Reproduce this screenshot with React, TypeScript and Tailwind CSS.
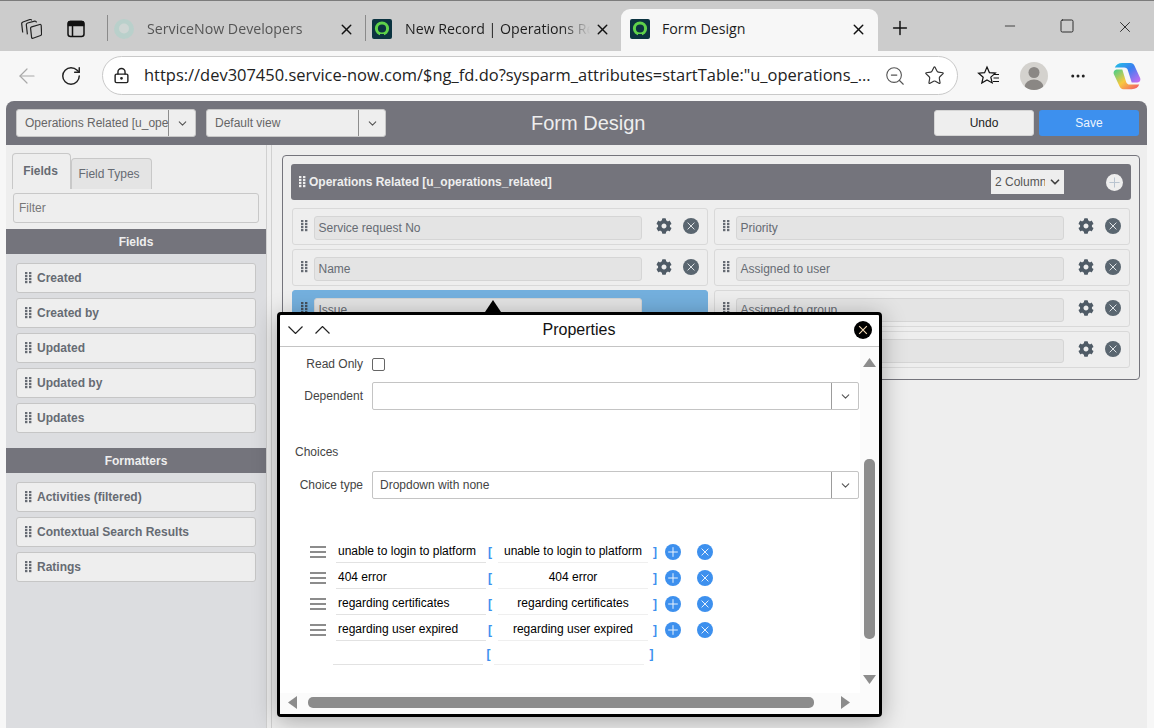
import { FaCog } from 'react-icons/fa';
import { LuChevronDown, LuPlus, LuX, LuMinus, LuSquare, LuArrowLeft, LuRotateCw, LuZoomOut, LuStar, LuEllipsis, LuLockKeyhole } from 'react-icons/lu';

const fieldItems = ['Created', 'Created by', 'Updated', 'Updated by', 'Updates'];
const formatters = ['Activities (filtered)', 'Contextual Search Results', 'Ratings'];
const leftRows = ['Service request No', 'Name', 'Issue'];
const rightRows = ['Priority', 'Assigned to user', 'Assigned to group', ''];
const choices = [
  { label: 'unable to login to platform', value: 'unable to login to platform' },
  { label: '404 error', value: '404 error' },
  { label: 'regarding certificates', value: 'regarding certificates' },
  { label: 'regarding user expired', value: 'regarding user expired' },
];

function Grip({ className }: { className: string }) {
  return (
    <svg viewBox="0 0 7 12" width="7" height="12" className={className} fill="currentColor">
      {[0, 3, 6, 9].map((y) => (
        <g key={y}>
          <rect x="0" y={y} width="2.4" height="2.2" />
          <rect x="4" y={y} width="2.4" height="2.2" />
        </g>
      ))}
    </svg>
  );
}

function Favicon({ faded }: { faded?: boolean }) {
  if (faded) {
    return (
      <svg viewBox="0 0 20 20" width="20" height="20">
        <circle cx="10" cy="10" r="10" fill="#b9d0cb" />
        <circle cx="10" cy="9.5" r="5" fill="#cfd6d4" />
      </svg>
    );
  }
  return (
    <svg viewBox="0 0 20 20" width="20" height="20">
      <rect width="20" height="20" rx="2" fill="#0b3340" />
      <circle cx="10" cy="9.5" r="5.6" fill="none" stroke="#5fd24a" strokeWidth="3" />
      <rect x="8" y="15" width="4" height="2.5" fill="#0b3340" />
    </svg>
  );
}

function CircleX({ bg, line, size = 16 }: { bg: string; line: string; size?: number }) {
  return (
    <svg viewBox="0 0 16 16" width={size} height={size}>
      <circle cx="8" cy="8" r="8" fill={bg} />
      <path d="M4.6 4.6l6.8 6.8M11.4 4.6l-6.8 6.8" stroke={line} strokeWidth="1" />
    </svg>
  );
}

function CirclePlus({ bg, line, size = 16 }: { bg: string; line: string; size?: number }) {
  return (
    <svg viewBox="0 0 16 16" width={size} height={size}>
      <circle cx="8" cy="8" r="8" fill={bg} />
      <path d="M8 3.2v9.6M3.2 8h9.6" stroke={line} strokeWidth="1" />
    </svg>
  );
}

function Triangle({ dir }: { dir: 'up' | 'down' | 'left' | 'right' }) {
  const pts = { up: '6.5,0 13,9 0,9', down: '0,0 13,0 6.5,9', left: '9,0 9,13 0,6.5', right: '0,0 9,6.5 0,13' }[dir];
  const w = dir === 'up' || dir === 'down' ? 13 : 9;
  const h = dir === 'up' || dir === 'down' ? 9 : 13;
  return (
    <svg viewBox={`0 0 ${w} ${h}`} width={w} height={h} fill="#8c8c8c">
      <polygon points={pts} />
    </svg>
  );
}

function Tab({ title, favicon, width, active, muted }: { title: string; favicon: React.ReactNode; width: string; active?: boolean; muted?: boolean }) {
  return (
    <div className={`flex h-[42px] items-center self-end pb-[2px] ${width} ${active ? 'rounded-t-[9px] bg-[#f7f7f7] pl-[9px] pr-[11px]' : 'pl-[6px] pr-[10px]'}`}>
      <div className="flex w-[20px] shrink-0 justify-center">{favicon}</div>
      <span className={`${active ? 'ml-[12px]' : 'ml-[13px] [mask-image:linear-gradient(to_right,black_85%,transparent)]'} min-w-0 flex-1 overflow-hidden whitespace-nowrap text-[14.2px] ${muted ? 'text-[#555]' : 'text-[#1d1d1d]'}`}>{title}</span>
      <LuX className="ml-1 shrink-0 text-[#111]" size={17} />
    </div>
  );
}

function HeaderSelect({ label }: { label: string }) {
  return (
    <div className="flex h-[28px] w-[180px] items-center rounded-[3px] border border-[#c8c8c8] bg-[#eeeeee] text-[12px] text-[#666]">
      <span className="w-[151px] overflow-hidden whitespace-nowrap pl-2">{label}</span>
      <span className="flex h-full flex-1 items-center justify-center border-l border-[#8d8d8d]">
        <LuChevronDown size={13} className="text-[#555]" />
      </span>
    </div>
  );
}

function SideItem({ label }: { label: string }) {
  return (
    <div className="flex h-[30px] items-center rounded-[3px] border border-[#c6c6c6] bg-[#eeeeee] pl-2 text-[12px] font-bold text-[#666b73]">
      <Grip className="mr-[5px] shrink-0 text-[#666b73]" />
      {label}
    </div>
  );
}

function FieldRow({ label, active }: { label: string; active?: boolean }) {
  return (
    <div className={`flex h-[37px] items-center rounded-[3px] border pl-[8px] ${active ? 'border-[#74b0de] bg-[#74b0de]' : 'border-[#d9d9d9] bg-[#eeeeee]'}`}>
      <Grip className={`mb-[1px] mr-[6px] shrink-0 ${active ? 'text-[#45525e]' : 'text-[#666b73]'}`} />
      <div className="mt-[2px] flex h-[24px] w-[328px] items-center rounded-[3px] border border-[#d5d5d5] bg-[#e4e4e4] pl-[3.5px] text-[12px] text-[#666b73]">{label}</div>
      {!active && (
        <>
          <FaCog size={16} className="mb-[1px] ml-[14px] shrink-0 text-[#4f5b66]" />
          <div className="mb-[1px] ml-[11px] shrink-0">
            <CircleX bg="#5a6670" line="#dfe3e6" />
          </div>
        </>
      )}
    </div>
  );
}

function PropSelect({ value }: { value?: string }) {
  return (
    <div className="flex h-[28px] flex-1 items-center rounded-[2px] border border-[#c4c4c4] bg-white text-[12px] text-[#444]">
      <span className="flex-1 pl-[7px]">{value}</span>
      <span className="flex h-full w-[27px] items-center justify-center border-l border-[#9c9c9c]">
        <LuChevronDown size={13} className="text-[#555]" />
      </span>
    </div>
  );
}

function ChoiceRow({ label, value }: { label: string; value: string }) {
  return (
    <div className="flex h-[26px] items-center text-[12px] text-black">
      <div className="flex w-[26px] shrink-0 flex-col gap-[3px]">
        <span className="h-[2px] w-[16px] bg-[#8c8c8c]" />
        <span className="h-[2px] w-[16px] bg-[#8c8c8c]" />
        <span className="h-[2px] w-[16px] bg-[#8c8c8c]" />
      </div>
      <div className="flex h-[24px] w-[150px] items-center self-start border-b border-[#e2e2e2] pl-[2px] pt-[1px]">{label}</div>
      <span className="w-[12px] pl-[2px] font-bold text-[#3d90ee]">[</span>
      <div className="flex h-[24px] w-[150px] items-center justify-center self-start border-b border-[#efefef] pt-[1px]">{value}</div>
      <span className="w-[12px] pl-[5px] font-bold text-[#3d90ee]">]</span>
      <div className="ml-[5px]">
        <CirclePlus bg="#3d90ee" line="#e8f1fc" />
      </div>
      <div className="ml-[16px]">
        <CircleX bg="#3d90ee" line="#e8f1fc" />
      </div>
    </div>
  );
}

function PropertiesPopup() {
  return (
    <div className="absolute left-[277px] top-[312px] flex h-[405px] w-[605px] flex-col rounded-[4px] border-[3px] border-black bg-white font-['Liberation_Sans',sans-serif] shadow-[0_4px_24px_rgba(0,0,0,0.3)]">
      <div className="absolute left-[205px] top-[-15px] h-0 w-0 border-x-[8px] border-b-[12px] border-x-transparent border-b-black" />
      <div className="flex h-[32px] shrink-0 items-center border-b border-[#c4c4c4] pb-[2px] pl-[8px] pr-[7px]">
        <svg viewBox="0 0 15 8" width="15" height="8" fill="none" stroke="#222" strokeWidth="1.2">
          <path d="M.5.5l7 7 7-7" />
        </svg>
        <svg viewBox="0 0 15 8" width="15" height="8" className="ml-[12px]" fill="none" stroke="#222" strokeWidth="1.2">
          <path d="M.5 7.5l7-7 7 7" />
        </svg>
        <span className="flex-1 pr-[26px] text-center text-[16px] text-[#111]">Properties</span>
        <CircleX bg="#000000" line="#f5dcb8" size={18} />
      </div>
      <div className="flex min-h-0 flex-1">
        <div className="min-w-0 flex-1 pl-[15px] pr-[1px] pt-[10px] text-[12px] text-[#444]">
          <div className="flex h-[14px] items-center">
            <span className="w-[68px] whitespace-nowrap text-right">Read Only</span>
            <span className="ml-[9px] h-[13px] w-[13px] rounded-[2px] border border-[#666] bg-white" />
          </div>
          <div className="mt-[11px] flex items-center">
            <span className="w-[68px] text-right">Dependent</span>
            <div className="ml-[9px] flex flex-1"><PropSelect /></div>
          </div>
          <div className="mt-[35px] h-[14px] leading-[14px]">Choices</div>
          <div className="mt-[12px] flex items-center">
            <span className="w-[68px] text-right">Choice type</span>
            <div className="ml-[9px] flex flex-1"><PropSelect value="Dropdown with none" /></div>
          </div>
          <div className="mt-[40px] pl-[15px] text-[12px]">
            {choices.map((c) => (
              <ChoiceRow key={c.label} label={c.label} value={c.value} />
            ))}
            <div className="flex h-[22px] items-center pl-[23px] text-black">
              <div className="h-[22px] w-[150px] border-b border-[#e2e2e2]" />
              <span className="w-[11px] text-center font-bold text-[#3d90ee]">[</span>
              <div className="h-[22px] w-[150px] border-b border-[#efefef]" />
              <span className="w-[12px] pl-[3px] text-center font-bold text-[#3d90ee]">]</span>
            </div>
          </div>
        </div>
        <div className="flex w-[19px] shrink-0 flex-col items-center bg-[#fbfbfb] pb-[9px] pt-[11px]">
          <Triangle dir="up" />
          <div className="flex-1" />
          <div className="h-[180px] w-[11px] rounded-[5px] bg-[#8c8c8c]" />
          <div className="h-[36px]" />
          <Triangle dir="down" />
        </div>
      </div>
      <div className="flex h-[21px] shrink-0 items-center bg-[#fbfbfb] pb-[2px] pl-[8px] pr-[29px]">
        <Triangle dir="left" />
        <div className="ml-[11px] h-[11px] w-[506px] rounded-[5px] bg-[#8c8c8c]" />
        <div className="flex-1" />
        <Triangle dir="right" />
      </div>
    </div>
  );
}

export default function App() {
  return (
    <div className="relative h-[728px] w-[1154px] overflow-hidden bg-[#f7f7f7] font-['Liberation_Sans',sans-serif]">
      {/* browser chrome */}
      <div className="flex h-[51px] items-end border-t border-[#7c7c7c] bg-[#cccccc] font-['Open_Sans',sans-serif]">
        <div className="flex h-[50px] w-[107px] shrink-0 items-center pl-[21px] pt-[5px]">
          <svg viewBox="0 0 21 20" width="21" height="20" fill="none" stroke="#222" strokeWidth="1.2" strokeLinejoin="round">
            <path d="M10.6 7.9l8.2-2.4c.8-.2 1.3.2 1.4 1l.4 8.6c0 .7-.3 1.2-1 1.4l-7.6 2.8c-.8.3-1.2 0-1.4-.8L9.6 9.4c-.1-.7.3-1.3 1-1.5z" />
            <path d="M15.6 3.4l-.8-1c-.3-.3-.7-.4-1.1-.3L6.6 4c-.9.3-1.4.9-1.3 1.8l1.1 9.6" />
            <path d="M10.8 1.4L10 .6c-.3-.2-.6-.3-1-.1L2 3c-.9.3-1.4 1-1.3 1.9l1 8.6" />
          </svg>
          <svg viewBox="0 0 20 20" width="20" height="20" className="ml-[24px]" fill="none" stroke="#111" strokeWidth="1.5">
            <rect x="2" y="2.5" width="16" height="15" rx="2.5" />
            <path d="M2.5 4a1.5 1.5 0 011.5-1.5h12A1.5 1.5 0 0117.5 4v2.5h-15z" fill="#111" />
            <path d="M6.5 6v11" />
          </svg>
        </div>
        <span className="mb-[10px] h-[26px] w-px shrink-0 bg-[#8a8a8a]" />
        <Tab title="ServiceNow Developers" width="w-[257px]" muted favicon={<Favicon faded />} />
        <span className="mb-[10px] h-[26px] w-px shrink-0 bg-[#8a8a8a]" />
        <Tab title="New Record | Operations Related" width="w-[255px]" favicon={<Favicon />} />
        <Tab title="Form Design" width="w-[257px]" active favicon={<Favicon />} />
        <div className="flex h-[42px] w-[44px] items-center justify-center pb-[4px]">
          <LuPlus size={22} strokeWidth={1.6} className="text-[#111]" />
        </div>
        <div className="ml-[80px] flex h-[50px] items-start gap-[41px] pt-[17px] text-[#222]">
          <LuMinus size={16} strokeWidth={1.2} />
          <LuSquare size={16} strokeWidth={1.4} />
          <LuX size={18} strokeWidth={1.2} />
        </div>
      </div>

      <div className="flex h-[50px] items-center pb-[1px] pl-[15px] font-['Open_Sans',sans-serif]">
        <LuArrowLeft size={24} strokeWidth={1.2} className="text-[#a9a9a9]" />
        <LuRotateCw size={22} strokeWidth={1.6} className="ml-[21px] text-[#222]" />
        <div className="ml-[20px] flex h-[39px] w-[856px] items-center rounded-full border border-[#c9c9c9] bg-white pl-[10px]">
          <LuLockKeyhole size={17} className="text-[#222]" />
          <span className="ml-[14px] w-[730px] overflow-hidden whitespace-nowrap text-[16.47px] text-[#222]">https://dev307450.service-now.com/$ng_fd.do?sysparm_attributes=startTable:"u_operations_...</span>
          <LuZoomOut size={22} strokeWidth={1.2} className="ml-[10px] text-[#555]" />
          <LuStar size={21} strokeWidth={1.3} className="ml-[18px] text-[#333]" />
        </div>
        <svg viewBox="0 0 24 24" width="24" height="24" className="ml-[19px]" fill="none" stroke="#111" strokeWidth="1.2">
          <path d="M10 3l2.4 5.6 6 .5-4.6 4 1.4 5.8L10 16l-5.2 3 1.4-5.8-4.6-4 6-.5z" />
          <path d="M17 10.5h5M16.5 14h5.5M16 17.5h6" />
        </svg>
        <div className="ml-[19px] flex h-[28px] w-[28px] items-center justify-center overflow-hidden rounded-full bg-[#d4d2ce]">
          <svg viewBox="0 0 28 28" width="28" height="28" fill="#8a8784">
            <circle cx="14" cy="10.5" r="5.5" />
            <ellipse cx="14" cy="25" rx="9.5" ry="7.5" />
          </svg>
        </div>
        <LuEllipsis size={18} className="ml-[21px] text-[#222]" />
        <svg viewBox="0 0 32 32" width="30" height="30" className="ml-[25px]">
          <defs>
            <linearGradient id="cpA" x1="0" y1="0" x2="1" y2="1">
              <stop offset="0" stopColor="#22c3e6" />
              <stop offset="0.45" stopColor="#3a7ff0" />
              <stop offset="1" stopColor="#d46af0" />
            </linearGradient>
            <linearGradient id="cpB" x1="0" y1="0" x2="1" y2="1">
              <stop offset="0" stopColor="#3fcf8e" />
              <stop offset="0.5" stopColor="#f8c93e" />
              <stop offset="1" stopColor="#f2506a" />
            </linearGradient>
          </defs>
          <path d="M11 2h9c2 0 3 1 4 3l6 13c1 3-1 5-4 5h-5l-4-13c-.6-2-2-3-4-3H3c1-3 4-5 8-5z" fill="url(#cpA)" />
          <path d="M21 30h-9c-2 0-3-1-4-3L2 14c-1-3 1-5 4-5h5l4 13c.6 2 2 3 4 3h10c-1 3-4 5-8 5z" fill="url(#cpB)" />
        </svg>
      </div>

      {/* page */}
      <div className="ml-[6px] flex h-[627px] w-[1141px] flex-col overflow-hidden rounded-t-[8px] bg-[#eeeeee]">
        <div className="flex h-[44px] shrink-0 items-center bg-[#74747c] pl-[10px] pr-[8px]">
          <HeaderSelect label="Operations Related [u_operations_related]" />
          <div className="ml-[10px]"><HeaderSelect label="Default view" /></div>
          <span className="ml-[145px] text-[20px] text-[#eeeeee]">Form Design</span>
          <button className="ml-auto h-[26px] w-[100px] rounded-[3px] border border-[#d5d5d5] bg-[#eeeeee] text-[12px] text-[#222]">Undo</button>
          <button className="ml-[5px] h-[26px] w-[100px] rounded-[3px] bg-[#3d90ee] text-[12px] text-[#eef5fd]">Save</button>
        </div>

        <div className="flex min-h-0 flex-1">
          {/* left palette */}
          <div className="flex w-[260px] shrink-0 flex-col">
            <div className="h-[84px] bg-[#eeeeee] pl-[6px] pt-[8px]">
              <div className="flex h-[36px] items-end">
                <div className="flex h-[36px] w-[59px] justify-center rounded-t-[4px] border-x border-t border-[#c8c8c8] pr-[2px] pt-[8px] text-[12px] font-bold text-[#666b73]">Fields</div>
                <div className="flex h-[31px] w-[81px] justify-center rounded-t-[4px] border-x border-t border-[#c8c8c8] bg-[#e4e4e4] pr-[5px] pt-[6px] text-[12px] text-[#666b73]">Field Types</div>
              </div>
              <div className="ml-px mt-[4px] flex h-[30px] w-[246px] items-center rounded-[3px] border border-[#c8c8c8] pl-[5px] text-[12px] text-[#777]">Filter</div>
            </div>
            <div className="flex h-[25px] items-center justify-center bg-[#74747c] text-[12px] font-bold text-[#eeeeee]">Fields</div>
            <div className="flex-1 bg-[#dcdde0]">
              <div className="flex flex-col gap-[5px] px-[10px] pt-[9px]">
                {fieldItems.map((f) => <SideItem key={f} label={f} />)}
              </div>
              <div className="mt-[15px] flex h-[25px] items-center justify-center bg-[#74747c] text-[12px] font-bold text-[#eeeeee]">Formatters</div>
              <div className="flex flex-col gap-[5px] px-[10px] pt-[9px]">
                {formatters.map((f) => <SideItem key={f} label={f} />)}
              </div>
            </div>
          </div>

          {/* splitter */}
          <div className="w-[6px] shrink-0 border-x border-[#d0d0d0] bg-[#eeeeee]" />

          {/* form */}
          <div className="min-w-0 flex-1 pl-[10px] pr-[7px] pt-[10px]">
            <div className="h-[225px] rounded-[4px] border border-[#74747c] p-[8px]">
              <div className="flex h-[36px] items-center rounded-[3px] bg-[#74747c] pl-[8px]">
                <Grip className="mr-[3px] text-[#eeeeee]" />
                <span className="text-[12px] font-bold text-[#eeeeee]">Operations Related [u_operations_related]</span>
                <div className="ml-auto flex h-[24px] w-[73px] items-center bg-[#eeeeee] pl-[4px] text-[12px] text-[#555]">
                  <span className="w-[50px] overflow-hidden whitespace-nowrap">2 Column</span>
                  <LuChevronDown size={14} strokeWidth={3} className="ml-[3px] text-[#444]" />
                </div>
                <div className="ml-[42px] mr-[8px]">
                  <CirclePlus bg="#eeeeee" line="#b9c4d0" size={17} />
                </div>
              </div>
              <div className="mt-[8px] grid grid-cols-[416px_416px] gap-x-[6px] pl-px">
                <div className="flex flex-col gap-[4px]">
                  {leftRows.map((r, i) => <FieldRow key={r} label={r} active={i === 2} />)}
                </div>
                <div className="flex flex-col gap-[4px]">
                  {rightRows.map((r) => <FieldRow key={r || 'blank'} label={r} />)}
                </div>
              </div>
            </div>
          </div>
        </div>
      </div>

      <PropertiesPopup />
    </div>
  );
}
